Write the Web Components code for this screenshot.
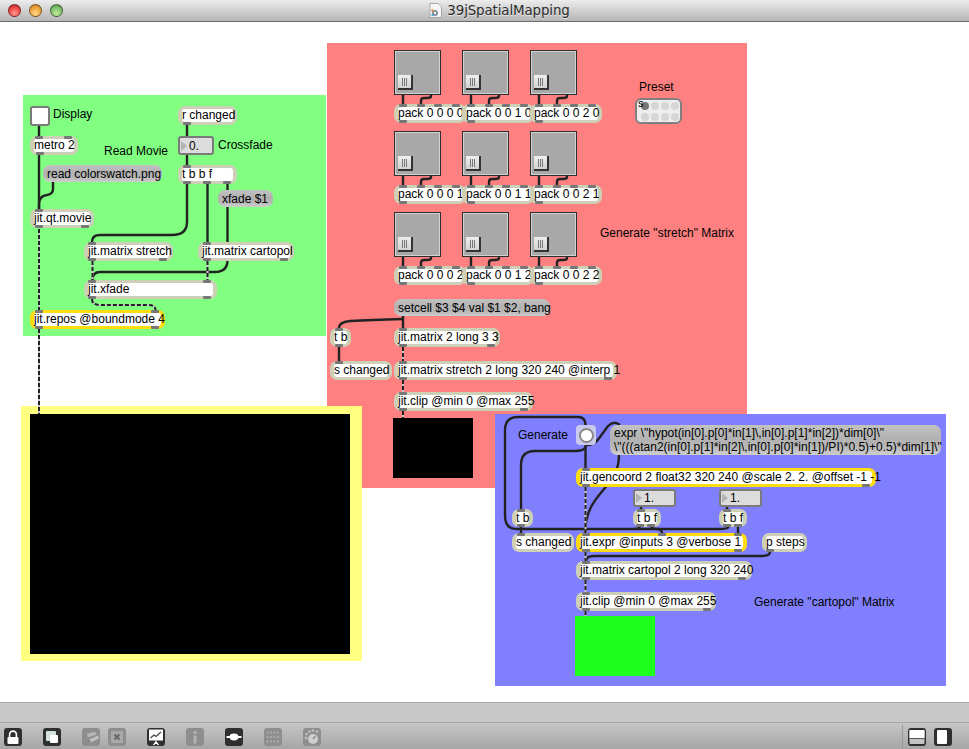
<!DOCTYPE html>
<html lang="en">
<head>
<meta charset="utf-8">
<title>39jSpatialMapping</title>
<style>
html,body{margin:0;padding:0;background:#fff;overflow:hidden}
</style>
</head>
<body>
<mx-window>
  <mx-titlebar slot="title">39jSpatialMapping</mx-titlebar>
  <mx-patcher>
    <mx-panel x="23" y="95" w="303" h="241" c="#80ff80"></mx-panel>
    <mx-panel x="327" y="43" w="420" h="445" c="#ff8080"></mx-panel>
    <mx-panel x="21" y="406" w="341" h="255" c="#ffff80"></mx-panel>
    <mx-panel x="495" y="414" w="451" h="272" c="#8080ff"></mx-panel>
    <mx-panel x="30" y="414" w="320" h="240" c="#000"></mx-panel>
    <mx-panel x="393" y="418" w="80" h="60" c="#000"></mx-panel>
    <mx-panel x="575" y="616" w="80" h="60" c="#1eff1e"></mx-panel>

    <mx-cords></mx-cords>

    <mx-label x="53" y="114">Display</mx-label>
    <mx-label x="104" y="151">Read Movie</mx-label>
    <mx-label x="218" y="145">Crossfade</mx-label>
    <mx-label x="639" y="87">Preset</mx-label>
    <mx-label x="600" y="233">Generate "stretch" Matrix</mx-label>
    <mx-label x="518" y="435">Generate</mx-label>
    <mx-label x="754" y="602">Generate "cartopol" Matrix</mx-label>

    <mx-toggle x="30" y="106"></mx-toggle>
    <mx-box x="30" y="136" w="48" in="39,68" out="40">metro 2</mx-box>
    <mx-msg x="43" y="165" w="119" h="17">read colorswatch.png</mx-msg>
    <mx-box x="30" y="209" w="64" in="39" out="39,85">jit.qt.movie</mx-box>
    <mx-box x="178" y="106" w="59" out="187">r changed</mx-box>
    <mx-flonum x="178" y="136" w="36" h="19">0.</mx-flonum>
    <mx-box x="178" y="165" w="59" in="187" out="187,207,227">t b b f</mx-box>
    <mx-msg x="218" y="190" w="55" h="17">xfade $1</mx-msg>
    <mx-box x="84" y="242" w="89" in="92" out="92,163">jit.matrix stretch</mx-box>
    <mx-box x="198" y="242" w="96" in="207" out="207,284">jit.matrix cartopol</mx-box>
    <mx-box x="84" y="280" w="133" in="92,207" out="92,207">jit.xfade</mx-box>
    <mx-box x="30" y="310" w="135" in="39,155" out="39,155" hot>jit.repos @boundmode 4</mx-box>

    <mx-slider x="394" y="50"></mx-slider><mx-slider x="462" y="50"></mx-slider><mx-slider x="530" y="50"></mx-slider>
    <mx-slider x="394" y="131"></mx-slider><mx-slider x="462" y="131"></mx-slider><mx-slider x="530" y="131"></mx-slider>
    <mx-slider x="394" y="212"></mx-slider><mx-slider x="462" y="212"></mx-slider><mx-slider x="530" y="212"></mx-slider>

    <mx-box x="394" y="104" w="72" in="403,421,438,456" out="403">pack 0 0 0 0</mx-box>
    <mx-box x="462" y="104" w="72" in="471,489,506,524" out="471">pack 0 0 1 0</mx-box>
    <mx-box x="530" y="104" w="72" in="539,557,574,592" out="539">pack 0 0 2 0</mx-box>
    <mx-box x="394" y="185" w="72" in="403,421,438,456" out="403">pack 0 0 0 1</mx-box>
    <mx-box x="462" y="185" w="72" in="471,489,506,524" out="471">pack 0 0 1 1</mx-box>
    <mx-box x="530" y="185" w="72" in="539,557,574,592" out="539">pack 0 0 2 1</mx-box>
    <mx-box x="394" y="266" w="72" in="403,421,438,456" out="403">pack 0 0 0 2</mx-box>
    <mx-box x="462" y="266" w="72" in="471,489,506,524" out="471">pack 0 0 1 2</mx-box>
    <mx-box x="530" y="266" w="72" in="539,557,574,592" out="539">pack 0 0 2 2</mx-box>

    <mx-preset x="635" y="98"></mx-preset>

    <mx-msg x="394" y="299" w="156" h="17">setcell $3 $4 val $1 $2, bang</mx-msg>
    <mx-box x="330" y="328" w="21" in="339" out="339">t b</mx-box>
    <mx-box x="394" y="328" w="106" in="403" out="403,491">jit.matrix 2 long 3 3</mx-box>
    <mx-box x="330" y="361" w="62" in="339">s changed</mx-box>
    <mx-box x="394" y="361" w="223" in="403" out="403,608">jit.matrix stretch 2 long 320 240 @interp 1</mx-box>
    <mx-box x="394" y="392" w="139" in="403" out="403,524">jit.clip @min 0 @max 255</mx-box>

    <mx-bang x="576" y="425"></mx-bang>
    <mx-msg x="610" y="425" w="331" h="30">expr \"hypot(in[0].p[0]*in[1]\,in[0].p[1]*in[2])*dim[0]\"<br>\"(((atan2(in[0].p[1]*in[2]\,in[0].p[0]*in[1])/PI)*0.5)+0.5)*dim[1]\"</mx-msg>
    <mx-box x="576" y="468" w="300" in="586" out="586,866" hot>jit.gencoord 2 float32 320 240 @scale 2. 2. @offset -1 -1</mx-box>
    <mx-flonum x="633" y="489" w="43" h="18">1.</mx-flonum>
    <mx-flonum x="719" y="489" w="43" h="18">1.</mx-flonum>
    <mx-box x="512" y="509" w="21" h="18" in="521" out="521">t b</mx-box>
    <mx-box x="633" y="509" w="28" h="18" in="641" out="640,651">t b f</mx-box>
    <mx-box x="719" y="509" w="28" h="18" in="727" out="727,738">t b f</mx-box>
    <mx-box x="512" y="533" w="62" in="521">s changed</mx-box>
    <mx-box x="576" y="533" w="171" in="586,662,738" out="586,738" hot>jit.expr @inputs 3 @verbose 1</mx-box>
    <mx-box x="762" y="533" w="45" out="770">p steps</mx-box>
    <mx-box x="576" y="561" w="176" in="586" out="586,742">jit.matrix cartopol 2 long 320 240</mx-box>
    <mx-box x="576" y="592" w="140" in="586" out="586,707">jit.clip @min 0 @max 255</mx-box>
  </mx-patcher>
  <mx-toolbar slot="tools"></mx-toolbar>
</mx-window>

<script>
const FONT = '"Liberation Sans", Arial, sans-serif';

/* Anything that sits on the free patcher canvas takes its place from x/y/w/h attributes.
   The canvas starts 22px below the page top; attributes are in window coordinates. */
class Placed extends HTMLElement {
  place(w, h) {
    const a = n => this.getAttribute(n);
    const W = a('w') ?? w, H = a('h') ?? h;
    this.style.left = a('x') + 'px';
    this.style.top = (a('y') - 22) + 'px';
    if (W != null) this.style.width = W + 'px';
    if (H != null) this.style.height = H + 'px';
    return [Number(W), Number(H)];
  }
  shadow(html) {
    this.attachShadow({mode: 'open'}).innerHTML = html;
  }
}

class MxWindow extends HTMLElement {
  constructor() {
    super();
    this.attachShadow({mode: 'open'}).innerHTML = `<style>
      :host{display:flex;flex-direction:column;width:969px;height:749px;font-family:${FONT};color:#000;overflow:hidden}
      .status{height:19px;flex:none;background:#c8c8c8;border-top:1px solid #a8a8a8;border-bottom:1px solid #a6a6a6}
    </style><slot name="title"></slot><slot></slot><div class="status"></div><slot name="tools"></slot>`;
  }
}

class MxTitlebar extends HTMLElement {
  constructor() {
    super();
    const light = (c1, c2, c3) => `radial-gradient(circle at 50% 75%, ${c1} 0, ${c2} 55%, ${c3} 100%)`;
    this.attachShadow({mode: 'open'}).innerHTML = `<style>
      :host{display:flex;align-items:center;flex:none;height:21px;border-bottom:1px solid #6c6c6c;
        background:linear-gradient(#ececec,#d6d6d6 40%,#b6b6b6);position:relative}
      .lights{display:flex;gap:8px;padding-left:8px;position:relative}
      i{display:block;width:11px;height:11px;border-radius:50%;border:.5px solid #0007;box-sizing:content-box}
      .r{background:${light('#ff9a90','#ee4a48','#b81c24')}}
      .y{background:${light('#ffd98a','#f0a440','#c07c20')}}
      .g{background:${light('#c4e8a0','#82c26c','#4a8c48')}}
      .t{flex:1;display:flex;justify-content:center;align-items:center;gap:5px;margin-left:-60px;padding-left:27px;
        font:13.4px "DejaVu Sans",sans-serif;color:#2c2c2c;letter-spacing:-.12px;text-shadow:0 1px 0 #e4e4e4}
    </style>
    <div class="lights"><i class="r"></i><i class="y"></i><i class="g"></i></div>
    <div class="t"><svg width="13" height="15" viewBox="0 0 13 15">
      <path d="M1 .5h8l3.5 3.5v10.5H1z" fill="#f6f6f6" stroke="#a8a8a8"/>
      <circle cx="6" cy="10" r="3" fill="#7f8d96"/><circle cx="6" cy="10" r="1.2" fill="#f4f4f4"/>
      <circle cx="3.5" cy="7.5" r="1.2" fill="#e38b3c"/><circle cx="3.5" cy="12" r="1.2" fill="#4aa7c9"/>
    </svg><slot></slot></div>`;
  }
}

class MxPatcher extends HTMLElement {
  constructor() {
    super();
    this.attachShadow({mode: 'open'}).innerHTML = `<style>
      :host{display:block;position:relative;flex:1 1 auto;background:#fff;overflow:hidden}
    </style><slot></slot>`;
  }
}

class MxPanel extends Placed {
  constructor() {
    super();
    this.shadow(`<style>:host{display:block;position:absolute;background:${this.getAttribute('c')}}</style>`);
    this.place();
  }
}

class MxLabel extends Placed {
  constructor() {
    super();
    this.shadow(`<style>:host{display:block;position:absolute;font:12px/14px ${FONT};color:#000;white-space:nowrap;margin-top:-7px}</style><slot></slot>`);
    this.place();
  }
}

class MxBox extends Placed {
  constructor() {
    super();
    const [w] = this.place(null, 19);
    const x = Number(this.getAttribute('x'));
    const ports = (n, cls) => (this.getAttribute(n) || '').split(',').filter(Boolean)
      .map(p => `<b class="${cls}" style="left:${Number(p) - x - 4}px"></b>`).join('');
    const hot = this.hasAttribute('hot');
    this.shadow(`<style>
      :host{display:block;position:absolute;box-sizing:border-box;font:12px/14px ${FONT};color:#000;white-space:nowrap}
      .o{position:absolute;inset:0;border-radius:7px;background:${hot ? '#ffdd11' : '#cdcfb6'}}
      .i{position:absolute;inset:3px 4px;border-radius:3px;background:#fff;display:flex;align-items:center}
      .i span{position:relative;top:-.5px}
      b{position:absolute;width:8px;height:3px;border-radius:1px;background:#777}
      .p-in{top:0}.p-out{bottom:0}
    </style><div class="o"></div><div class="i"><span><slot></slot></span></div>${ports('in', 'p-in')}${ports('out', 'p-out')}`);
  }
}

class MxMsg extends Placed {
  constructor() {
    super();
    this.shadow(`<style>
      :host{display:flex;align-items:center;position:absolute;box-sizing:border-box;padding:0 4px;border-radius:7px;
        background:linear-gradient(#c2c2c2,#b2b2b2 45%,#b6b6b6 70%,#cecece);
        font:12px/14px ${FONT};color:#000;white-space:nowrap}
    </style><span><slot></slot></span>`);
    this.place();
  }
}

class MxFlonum extends Placed {
  constructor() {
    super();
    this.shadow(`<style>
      :host{display:flex;align-items:center;position:absolute;box-sizing:border-box;border:2px solid #7a7a7a;border-radius:3px;background:#dcdcdc;
        font:12px/14px ${FONT};color:#000;white-space:nowrap;padding-left:9px}
      i{position:absolute;left:1px;top:50%;margin-top:-5px;border-left:6px solid #b4b4b4;border-top:5px solid transparent;border-bottom:5px solid transparent}
    </style><i></i><slot></slot>`);
    this.place();
  }
}

class MxToggle extends Placed {
  constructor() {
    super();
    this.shadow(`<style>:host{display:block;position:absolute;box-sizing:border-box;border:2px solid #7a7a7a;border-radius:3px;background:#fff}</style>`);
    this.place(20, 20);
  }
}

class MxBang extends Placed {
  constructor() {
    super();
    this.shadow(`<style>
      :host{display:flex;align-items:center;justify-content:center;position:absolute;border-radius:4px;background:#c9c9ee}
      i{display:block;box-sizing:border-box;width:15px;height:15px;border-radius:50%;background:#fff;border:2px solid #8a8a8a}
    </style><i></i>`);
    this.place(20, 20);
  }
}

class MxSlider extends Placed {
  constructor() {
    super();
    this.shadow(`<style>
      :host{display:block;position:absolute;box-sizing:border-box;border:1px solid #2e2e2e;background:#a8a8a8;box-shadow:inset 0 0 0 1px #d2d2d2}
      .k{position:absolute;left:3px;top:24px;width:15px;height:15px;box-sizing:border-box;background:linear-gradient(#eee,#d2d2d2);
         border-right:2px solid #333;border-bottom:2px solid #333;display:flex;justify-content:center;align-items:center;gap:1px}
      .k i{display:block;width:1px;height:8px;background:#777}
    </style><div class="k"><i></i><i></i><i></i></div>`);
    this.place(47, 45);
  }
}

class MxPreset extends Placed {
  constructor() {
    super();
    const dots = Array.from({length: 8}, (_, i) => `<i class="${i === 0 ? 'on' : ''}"></i>`).join('');
    this.shadow(`<style>
      :host{display:block;position:absolute;box-sizing:border-box;border:2px solid #808080;border-radius:6px;background:#eee}
      .g{display:grid;grid-template-columns:repeat(4,8px);grid-auto-rows:8px;gap:3px 2px;padding:2px 0 0 4px}
      i{display:block;border-radius:50%;background:#d6d6d6}
      i.on{background:#777}
      span{position:absolute;left:1px;top:-3px;font:11px/12px ${FONT};color:#000}
    </style><div class="g">${dots}</div><span>s</span>`);
    this.place(47, 26);
  }
}

class MxCords extends HTMLElement {
  constructor() {
    super();
    const solid = [
      'M39 126V136', 'M39 155V209', 'M53 182V189Q53 194 47 195Q39 196 39 204V209',
      'M187 125V136', 'M187 155V165',
      'M187 184V222Q187 235 172 235H100Q92 235 92 242',
      'M207.5 184V242', 'M227.5 184V190', 'M227.5 207V260Q227.5 272 215 272H100Q92.5 272 92.5 280',
      'M339 347V361',
      'M403 316V328', 'M403 319Q370 320 350 321Q339 322 339 328',
      'M585.5 445V468',
      'M729 527Q727 529 720 529H516Q505 529 505 515V430Q505 417 518 417H578Q585.5 417 585.5 425',
      'M585.5 447Q584 451 575 451H535Q521 451 521 465V509',
      'M521 527V533', 'M640 527Q639 529 634 529', 'M651 527Q653 529 657 529Q662 529 662 533', 'M738 527V533',
      'M586 445Q594 446 600 437L608 426Q614 420 620 425',
      'M619 455C619 490 586 490 585 533',
      'M770 552Q770 556 762 556H594Q586 556 586 561',
      'M641 507V509', 'M727 507V509'
    ];
    for (const y of [95, 176, 257]) for (const [a, b, c] of [[403, 431, 421], [471, 499, 489], [539, 567, 557]]) {
      solid.push(`M${a} ${y}V${y + 9}`);
      solid.push(`M${b} ${y}V${y + 1}Q${b} ${y + 3} ${b - 4} ${y + 3}H${c + 3}Q${c} ${y + 3} ${c} ${y + 6}V${y + 9}`);
    }
    const dashed = [
      'M39 229V310', 'M39 329V414',
      'M92.5 261V280', 'M207.5 261V280',
      'M92 299Q92 305 100 305H148Q155.5 305 155.5 310',
      'M403 347V361', 'M403 380V392', 'M403 411V418',
      'M585.5 487V533', 'M585.5 552V561', 'M585.5 580V592', 'M585.5 611V616'
    ];
    const p = (d, extra) => `<path d="${d}" ${extra}/>`;
    this.attachShadow({mode: 'open'}).innerHTML = `<style>
      :host{display:block;position:absolute;left:0;top:0;width:969px;height:681px;pointer-events:none}
      svg{display:block}
      path{fill:none}
    </style><svg width="969" height="681" viewBox="0 22 969 681">
      ${solid.map(d => p(d, 'stroke="#222" stroke-width="2.4"')).join('')}
      ${dashed.map(d => p(d, 'stroke="#c9c9c9" stroke-width="2"')).join('')}
      ${dashed.map(d => p(d, 'stroke="#222" stroke-width="2" stroke-dasharray="4 2"')).join('')}
    </svg>`;
  }
}

const TOOL_ICONS = {
  lock: `<rect x="3.5" y="9" width="11" height="7" rx="1" fill="#fff"/><path d="M5.6 9.5V6.5a3.4 3.4 0 0 1 6.8 0V9.5" fill="none" stroke="#fff" stroke-width="1.6"/>`,
  layers: `<rect x="3" y="3" width="10" height="10" rx="1" fill="#d4e2de"/><rect x="7" y="7" width="8" height="8" rx="1" fill="#fff"/>`,
  cyl: `<path d="M3 6.5L13 3.5l1.5 3L4.5 10z" fill="#b6b6b6"/><path d="M6 12L16 7.5l1 3L7.5 15z" fill="#c0c0c0"/><ellipse cx="4" cy="8" rx="1.6" ry="2" fill="#8a8a8a"/><ellipse cx="7" cy="13.5" rx="1.6" ry="2" fill="#8a8a8a"/>`,
  x: `<rect x="3" y="3" width="12" height="12" rx="1" fill="#a8a8a8"/><path d="M6.5 6.5l5 5M11.5 6.5l-5 5" stroke="#666" stroke-width="1.8"/>`,
  chart: `<rect x="2" y="1.5" width="14" height="11" fill="#fff"/><path d="M3.5 10L7 7l2 1.5L14 4" fill="none" stroke="#444" stroke-width="1.2"/><path d="M9 12.5V14M9 14L6.5 17M9 14l2.5 3" stroke="#fff" stroke-width="1.3" fill="none"/>`,
  info: `<circle cx="9" cy="4.5" r="1.7" fill="#b4b4b4"/><rect x="7.6" y="7.5" width="2.8" height="8" fill="#b4b4b4"/>`,
  cord: `<rect x="1.5" y="8" width="15" height="2" fill="#fff"/><ellipse cx="9" cy="9" rx="4.5" ry="3.4" fill="#fff"/>`,
  grid: [3.5, 7, 10.5, 14].flatMap(x => [4.5, 9, 13.5].map(y => `<rect x="${x - .9}" y="${y - .9}" width="1.8" height="1.8" fill="#b0b0b0"/>`)).join(''),
  dial: `<circle cx="10" cy="11" r="5" fill="#cfcfcf"/><path d="M10 11l2.5-3" stroke="#888" stroke-width="1.3"/>` +
    [[3,10],[3.6,6],[6.5,3.5],[10,2.5],[14,3.5]].map(([x, y]) => `<circle cx="${x}" cy="${y}" r="1.2" fill="#c4c4c4"/>`).join(''),
  win1: `<rect x="1.5" y="2" width="15" height="14" rx="1" fill="#c4c4c4"/><rect x="1.5" y="2" width="15" height="8" fill="#fff"/><rect x="1.5" y="10" width="15" height="1" fill="#555"/>`,
  win2: `<rect x="3" y="2" width="10" height="14" rx="1" fill="#fff"/>`
};

class MxTool extends HTMLElement {
  constructor() {
    super();
    const off = this.hasAttribute('off');
    const gap = this.getAttribute('gap') || 0;
    this.attachShadow({mode: 'open'}).innerHTML = `<style>
      :host{display:block;flex:none;width:18px;height:18px;margin-left:${gap}px;border-radius:3px;background:${off ? '#8e8e8e' : '#2f2f2f'}}
      svg{display:block}
    </style><svg width="18" height="18" viewBox="0 0 18 18">${TOOL_ICONS[this.getAttribute('icon')]}</svg>`;
  }
}

class MxToolbar extends HTMLElement {
  constructor() {
    super();
    const tools = [['lock',4],['layers',21],['cyl',21,1],['x',8,1],['chart',21],['info',21,1],['cord',21],['grid',21,1],['dial',21,1]];
    const t = ([i, g, off]) => `<mx-tool icon="${i}" gap="${g}"${off ? ' off' : ''}></mx-tool>`;
    this.attachShadow({mode: 'open'}).innerHTML = `<style>
      :host{display:flex;align-items:center;flex:none;height:26px;padding-top:1px;box-sizing:border-box;background:linear-gradient(#c6c6c6,#a6a6a6)}
      .sp{flex:1}
      .d{width:1px;height:24px;background:#9a9a9a;margin-right:5px}
    </style>${tools.map(t).join('')}<div class="sp"></div><div class="d"></div>
    <mx-tool icon="win1"></mx-tool><mx-tool icon="win2" gap="8"></mx-tool><div style="width:17px"></div>`;
  }
}

customElements.define('mx-tool', MxTool);
customElements.define('mx-toolbar', MxToolbar);
customElements.define('mx-window', MxWindow);
customElements.define('mx-titlebar', MxTitlebar);
customElements.define('mx-patcher', MxPatcher);
customElements.define('mx-panel', MxPanel);
customElements.define('mx-label', MxLabel);
customElements.define('mx-box', MxBox);
customElements.define('mx-msg', MxMsg);
customElements.define('mx-flonum', MxFlonum);
customElements.define('mx-toggle', MxToggle);
customElements.define('mx-bang', MxBang);
customElements.define('mx-slider', MxSlider);
customElements.define('mx-preset', MxPreset);
customElements.define('mx-cords', MxCords);
</script>
</body>
</html>
